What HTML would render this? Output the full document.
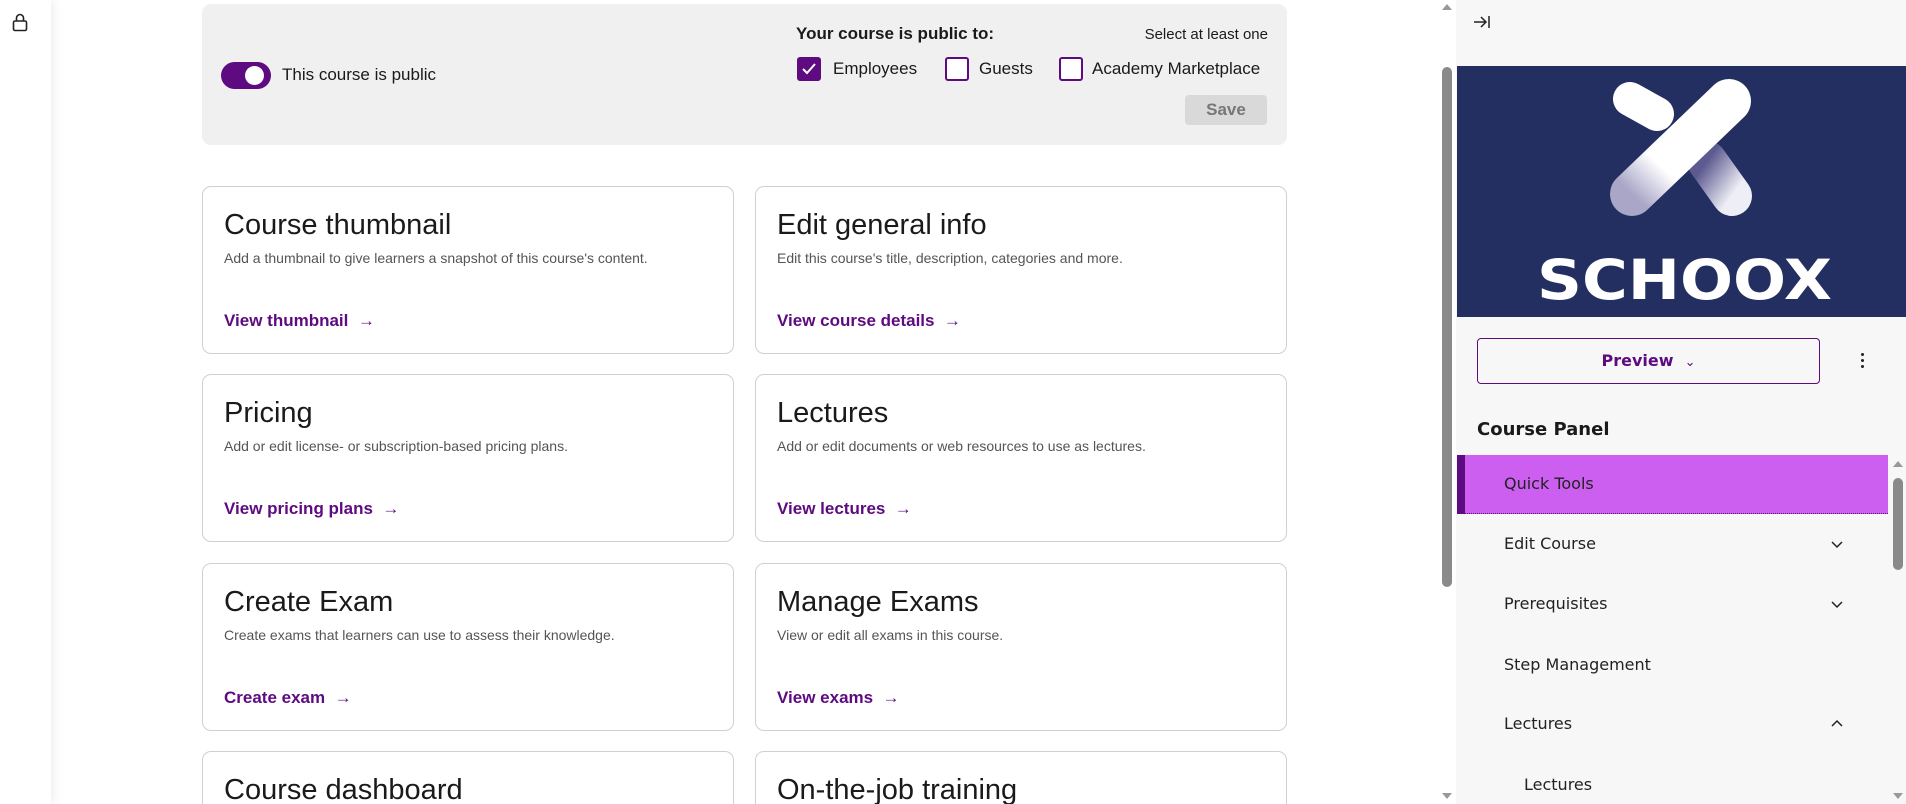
<!DOCTYPE html>
<html style="width:1906px;height:804px;overflow:hidden"><head><meta charset="utf-8"><style>
*{box-sizing:border-box;margin:0;padding:0}
html,body{width:1906px;height:804px;overflow:hidden}
body{background:#fff;font-family:"Liberation Sans",Arial,sans-serif;position:relative;color:#1a1a1a}
.abs{position:absolute}
.leftbar{left:0;top:0;width:51px;height:804px;background:#fff;box-shadow:2px 0 10px rgba(0,0,0,.08)}
.top{left:202px;top:4px;width:1085px;height:141px;background:#f0f0f0;border-radius:9px}
.card{position:absolute;width:532px;height:168px;border:1px solid #d0d0d0;border-radius:9px;background:#fff;overflow:hidden}
.card h2{position:absolute;left:21px;top:22px;font-size:29px;font-weight:400;color:#1a1a1a}
.card p{position:absolute;left:21px;top:63px;font-size:14px;color:#555}
.card a{position:absolute;left:21px;top:124px;font-size:17px;font-weight:700;color:#5e0a80;text-decoration:none}
.cb{position:absolute;top:57px;width:24px;height:24px;border:2px solid #5e0a80;border-radius:3px;background:#fff}
.lbl{position:absolute;top:59px;font-size:17px;color:#1a1a1a}
.right{left:1456px;top:0;width:450px;height:804px;background:#f7f7f7}
.side{font-family:"DejaVu Sans",Verdana,sans-serif}
.item{position:absolute;left:1504px;font-size:16px;color:#222;font-family:"DejaVu Sans",Verdana,sans-serif}
.chev{position:absolute;left:1830px;width:14px;height:14px}
</style></head><body>
<div class="abs leftbar"></div>
<svg class="abs" style="left:12px;top:13px" width="16" height="19" viewBox="0 0 16 19"><rect x="1.5" y="8" width="13" height="9.5" rx="1.5" fill="none" stroke="#222" stroke-width="1.6"/><path d="M4.5 8V5a3.5 3.5 0 0 1 7 0v3" fill="none" stroke="#222" stroke-width="1.6"/></svg>

<div class="abs top"></div>
<div class="abs" style="left:221px;top:62px;width:50px;height:27px;border-radius:14px;background:#5e0a80"></div>
<div class="abs" style="left:245px;top:66px;width:19px;height:19px;border-radius:50%;background:#fff"></div>
<div class="abs" style="left:282px;top:65px;font-size:17px">This course is public</div>
<div class="abs" style="left:796px;top:24px;font-size:17px;font-weight:700">Your course is public to:</div>
<div class="abs" style="left:1100px;width:168px;text-align:right;top:26px;font-size:15px">Select at least one</div>
<div class="cb" style="left:797px;background:#5e0a80"><svg width="20" height="20" viewBox="0 0 20 20" style="position:absolute;left:0;top:0"><path d="M4 10l4 4 8-9" fill="none" stroke="#fff" stroke-width="2"/></svg></div>
<div class="lbl" style="left:833px">Employees</div>
<div class="cb" style="left:945px"></div>
<div class="lbl" style="left:979px">Guests</div>
<div class="cb" style="left:1059px"></div>
<div class="lbl" style="left:1092px">Academy Marketplace</div>
<div class="abs" style="left:1185px;top:95px;width:82px;height:30px;background:#d9d9d9;border-radius:4px;font-size:17px;font-weight:700;color:#777;text-align:center;line-height:30px">Save</div>

<div class="card" style="left:202px;top:186px"><h2>Course thumbnail</h2><p>Add a thumbnail to give learners a snapshot of this course's content.</p><a>View thumbnail &nbsp;→</a></div>
<div class="card" style="left:755px;top:186px"><h2>Edit general info</h2><p>Edit this course's title, description, categories and more.</p><a>View course details &nbsp;→</a></div>
<div class="card" style="left:202px;top:374px"><h2>Pricing</h2><p>Add or edit license- or subscription-based pricing plans.</p><a>View pricing plans &nbsp;→</a></div>
<div class="card" style="left:755px;top:374px"><h2>Lectures</h2><p>Add or edit documents or web resources to use as lectures.</p><a>View lectures &nbsp;→</a></div>
<div class="card" style="left:202px;top:563px"><h2>Create Exam</h2><p>Create exams that learners can use to assess their knowledge.</p><a>Create exam &nbsp;→</a></div>
<div class="card" style="left:755px;top:563px"><h2>Manage Exams</h2><p>View or edit all exams in this course.</p><a>View exams &nbsp;→</a></div>
<div class="card" style="left:202px;top:751px;height:53px;border-bottom:none;border-radius:9px 9px 0 0"><h2>Course dashboard</h2></div>
<div class="card" style="left:755px;top:751px;height:53px;border-bottom:none;border-radius:9px 9px 0 0"><h2>On-the-job training</h2></div>

<div class="abs" style="left:1438px;top:0;width:18px;height:804px;background:#fff"></div>
<div class="abs" style="left:1442px;top:67px;width:10px;height:520px;border-radius:5px;background:#8a8a8a"></div>
<div class="abs" style="left:1442px;top:4px;width:0;height:0;border-left:5px solid transparent;border-right:5px solid transparent;border-bottom:6px solid #999"></div>
<div class="abs" style="left:1442px;top:793px;width:0;height:0;border-left:5px solid transparent;border-right:5px solid transparent;border-top:6px solid #999"></div>

<div class="abs right"></div>
<svg class="abs" style="left:1473px;top:14px" width="18" height="16" viewBox="0 0 18 16"><path d="M1 8h12M8 3l5 5-5 5M16 2v12" fill="none" stroke="#222" stroke-width="1.5"/></svg>
<div class="abs" style="left:1457px;top:66px;width:449px;height:251px;background:#232f60;overflow:hidden">
<svg width="449" height="251" viewBox="0 0 449 251"><defs><linearGradient id="g" x1="0" y1="0" x2="1" y2="1"><stop offset="0" stop-color="#5d5a90"/><stop offset="1" stop-color="#eeeef6"/></linearGradient><linearGradient id="g2" x1="1" y1="0" x2="0" y2="1"><stop offset="0" stop-color="#fff"/><stop offset="0.7" stop-color="#fff"/><stop offset="1" stop-color="#a9a6c8"/></linearGradient></defs>
<line x1="250" y1="95" x2="275" y2="130" stroke="url(#g)" stroke-width="40" stroke-linecap="round"/>
<line x1="173" y1="33" x2="200" y2="48" stroke="#fff" stroke-width="34" stroke-linecap="round"/>
<line x1="272" y1="35" x2="175" y2="128" stroke="url(#g2)" stroke-width="44" stroke-linecap="round"/>
<text x="80" y="233" textLength="295" lengthAdjust="spacingAndGlyphs" font-family="DejaVu Sans" font-weight="700" font-size="55" fill="#fff">SCHOOX</text></svg></div>
<div class="abs side" style="left:1477px;top:338px;width:343px;height:46px;border:1.5px solid #5e0a80;border-radius:4px;background:#f7f7f7;text-align:center;line-height:43px;font-size:16px;font-weight:700;color:#5e0a80">Preview &nbsp;<span style="font-weight:400;font-size:13px">⌄</span></div>
<div class="abs" style="left:1861px;top:353px;width:3px;height:3px;border-radius:50%;background:#222;box-shadow:0 6px 0 #222,0 12px 0 #222"></div>
<div class="abs side" style="left:1477px;top:419px;font-size:18px;font-weight:700;color:#1a1a1a">Course Panel</div>
<div class="abs" style="left:1457px;top:455px;width:431px;height:59px;background:#cc5ef0;border-bottom:1px dotted #5e0a80"></div>
<div class="abs" style="left:1457px;top:455px;width:8px;height:59px;background:#5e0a80"></div>
<div class="item" style="top:474px">Quick Tools</div>
<div class="item" style="top:534px">Edit Course</div>
<div class="item" style="top:594px">Prerequisites</div>
<div class="item" style="top:655px">Step Management</div>
<div class="item" style="top:714px">Lectures</div>
<div class="item" style="top:775px;left:1524px">Lectures</div>
<svg class="chev" style="top:537px" viewBox="0 0 14 14"><path d="M2 5l5 5 5-5" fill="none" stroke="#222" stroke-width="1.5"/></svg>
<svg class="chev" style="top:597px" viewBox="0 0 14 14"><path d="M2 5l5 5 5-5" fill="none" stroke="#222" stroke-width="1.5"/></svg>
<svg class="chev" style="top:717px" viewBox="0 0 14 14"><path d="M2 9l5-5 5 5" fill="none" stroke="#222" stroke-width="1.5"/></svg>
<div class="abs" style="left:1888px;top:455px;width:18px;height:349px;background:#f7f7f7"></div>
<div class="abs" style="left:1893px;top:478px;width:10px;height:92px;border-radius:5px;background:#8a8a8a"></div>
<div class="abs" style="left:1893px;top:461px;width:0;height:0;border-left:5px solid transparent;border-right:5px solid transparent;border-bottom:6px solid #999"></div>
<div class="abs" style="left:1893px;top:793px;width:0;height:0;border-left:5px solid transparent;border-right:5px solid transparent;border-top:6px solid #999"></div>
</body></html>
